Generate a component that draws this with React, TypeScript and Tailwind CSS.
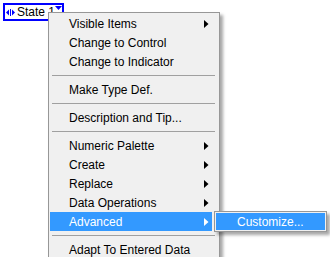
import React from 'react';

type Entry =
  | { kind: 'item'; label: string; sub?: boolean; active?: boolean }
  | { kind: 'sep' };

const entries: Entry[] = [
  { kind: 'item', label: 'Visible Items', sub: true },
  { kind: 'item', label: 'Change to Control' },
  { kind: 'item', label: 'Change to Indicator' },
  { kind: 'sep' },
  { kind: 'item', label: 'Make Type Def.' },
  { kind: 'sep' },
  { kind: 'item', label: 'Description and Tip...' },
  { kind: 'sep' },
  { kind: 'item', label: 'Numeric Palette', sub: true },
  { kind: 'item', label: 'Create', sub: true },
  { kind: 'item', label: 'Replace', sub: true },
  { kind: 'item', label: 'Data Operations', sub: true },
  { kind: 'item', label: 'Advanced', sub: true, active: true },
  { kind: 'sep' },
  { kind: 'item', label: 'Adapt To Entered Data' },
];

function SubArrow({ white }: { white?: boolean }) {
  return (
    <svg width="5" height="8" viewBox="0 0 5 8" className="shrink-0">
      <path d="M0 0 L4.5 4 L0 8 Z" fill={white ? '#ffffff' : '#000000'} />
    </svg>
  );
}

function StateControl() {
  return (
    <div className="ml-[3px] mt-[3px] flex h-[18px] w-[61px] items-center border-2 border-[#0000ff] bg-white">
      <svg width="9" height="7" viewBox="0 0 9 7" className="ml-[1px] shrink-0">
        <path d="M0 3.5 L3 0.5 L3 6.5 Z" fill="#0000ff" />
        <path d="M9 3.5 L6 0.5 L6 6.5 Z" fill="#0000ff" />
        <rect x="4" y="0" width="1" height="7" fill="#0000ff" />
      </svg>
      <span className="ml-[2px] shrink-0 whitespace-nowrap text-[12px] leading-none text-black">State 1</span>
      <svg width="7" height="4" viewBox="0 0 7 4" className="ml-auto mr-[2px] mt-[1px] self-start shrink-0">
        <path d="M0 0 L7 0 L3.5 4 Z" fill="#0000ff" />
      </svg>
    </div>
  );
}

export default function App() {
  return (
    <div
      className="relative h-[257px] w-[330px] overflow-hidden bg-white"
      style={{ fontFamily: '"Liberation Sans", Arial, sans-serif' }}
    >
      <StateControl />

      {/* Context menu */}
      <div className="absolute left-[48px] top-[12px] w-[172px] border border-[#979797] bg-[#f0f0f0] pt-[1px] pb-[20px] shadow-[3px_3px_3px_rgba(0,0,0,0.35)]">
        {entries.map((e, i) =>
          e.kind === 'sep' ? (
            <div key={i} className="flex h-[9px] items-center pl-[3px] pr-[4px]">
              <div className="h-[1px] w-full bg-[#a0a0a0]" />
            </div>
          ) : (
            <div
              key={i}
              className={
                'ml-[1px] mr-[7px] flex h-[19px] items-center pl-[19px] pr-[3px] text-[12px] ' +
                (e.active ? 'bg-[#3399ff] text-white' : 'text-black')
              }
            >
              <span className="flex-1 whitespace-nowrap">{e.label}</span>
              {e.sub && <SubArrow white={e.active} />}
            </div>
          )
        )}
      </div>

      {/* Submenu */}
      <div className="absolute left-[214px] top-[211px] w-[113px] border border-[#979797] bg-[#f0f0f0] p-[1px] shadow-[3px_3px_3px_rgba(0,0,0,0.35)]">
        <div className="flex h-[17px] items-center bg-[#3399ff] pl-[21px] text-[12px] text-white">
          Customize...
        </div>
      </div>
    </div>
  );
}
